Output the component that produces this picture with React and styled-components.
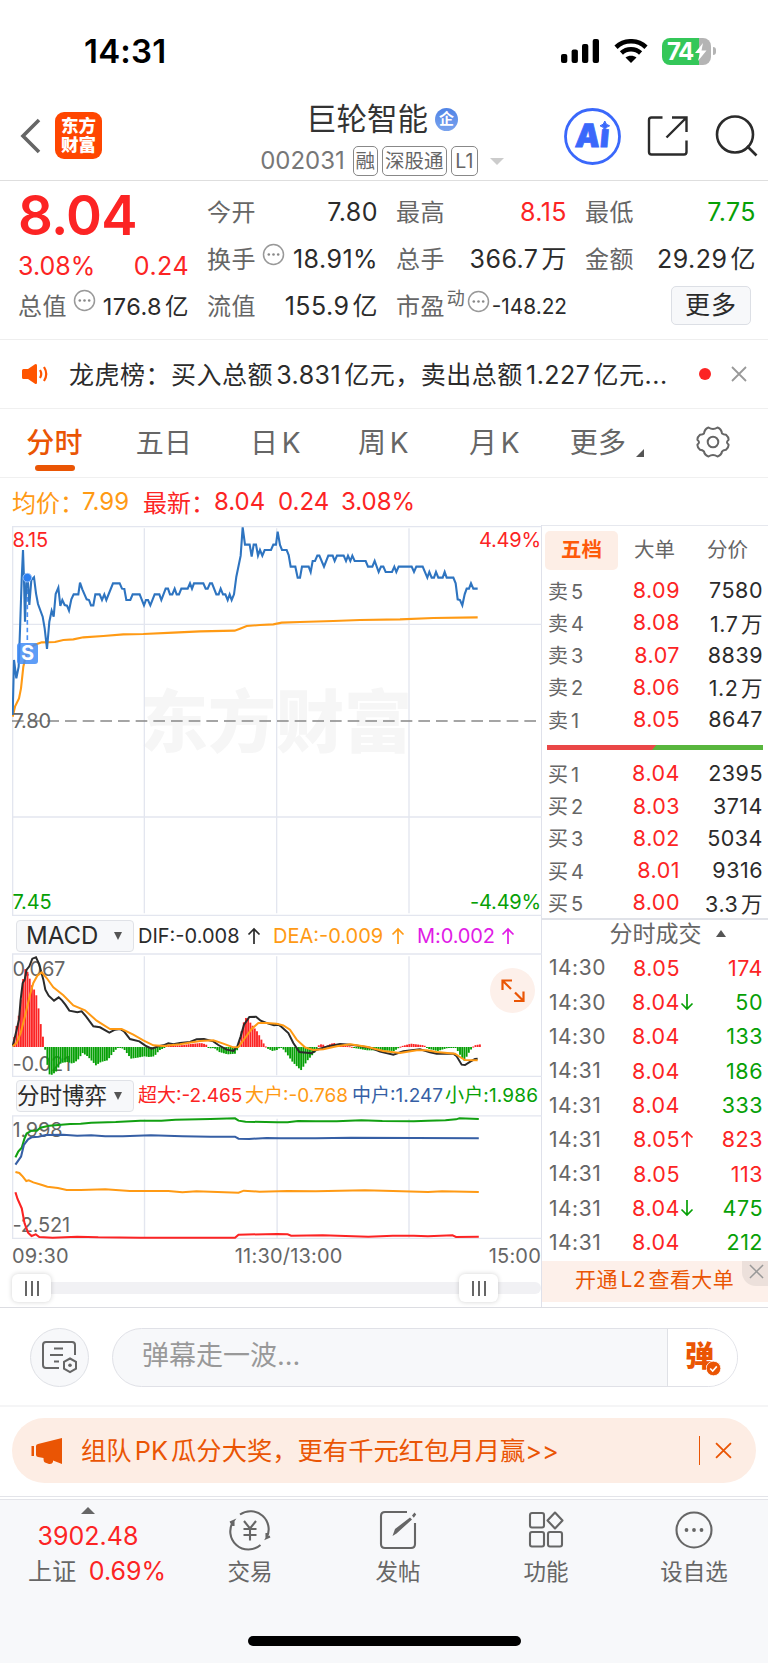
import React from "react";
import styled, { createGlobalStyle, css } from "styled-components";

const RED = "#fc2424";
const GREEN = "#06a006";
const ORANGE = "#ff9a14";
const BRAND = "#ea5504";
const INK = "#2b2b2b";
const GREY = "#666";

const Global = createGlobalStyle`
  * { box-sizing: border-box; }
  body { margin: 0; background: #fff; }
  body, #root {
    font-family: Inter, "Noto Sans CJK SC", sans-serif;
    color: ${INK};
    text-autospace: normal;
  }
`;

const Page = styled.div`
  width: 768px;
  height: 1663px;
  overflow: hidden;
  display: flex;
  flex-direction: column;
  background: #fff;
  white-space: nowrap;
`;

/* ---------- status bar ---------- */
const StatusBar = styled.div`
  height: 92px;
  display: flex;
  align-items: center;
  justify-content: space-between;
  padding: 10px 52px 0 84px;
`;
const Clock = styled.div`
  font-size: 33px;
  font-weight: 600;
  color: #000;
  letter-spacing: 0.2px;
`;
const StatusIcons = styled.div`
  display: flex;
  align-items: center;
`;
const Battery = styled.div`
  position: relative;
  width: 49px;
  height: 27px;
  margin-left: 14px;
  border-radius: 8px;
  background: linear-gradient(90deg, #34c759 37px, #b4b4b4 37px);
  color: #fff;
  font-size: 24px;
  line-height: 27px;
  font-weight: 700;
  padding-left: 5px;
  letter-spacing: -1.6px;
`;
const Bolt = styled.svg`
  position: absolute;
  left: 32px;
  top: 5px;
`;
const BatteryNub = styled.div`
  width: 3px;
  height: 8px;
  margin-left: 2px;
  border-radius: 0 4px 4px 0;
  background: #b4b4b4;
`;

/* ---------- header ---------- */
const Header = styled.div`
  height: 89px;
  display: grid;
  grid-template-columns: 1fr auto 1fr;
  border-bottom: 1px solid #dedede;
`;
const HeaderLeft = styled.div`
  display: flex;
  align-items: center;
  padding-left: 20px;
`;
const Logo = styled.div`
  width: 47px;
  height: 47px;
  margin: -1px 0 0 14px;
  border-radius: 9px;
  background: #ff4600;
  color: #fff;
  font-size: 17.5px;
  line-height: 19px;
  font-weight: 900;
  text-align: center;
  padding-top: 4px;
`;
const Title = styled.div`
  display: flex;
  flex-direction: column;
  align-items: center;
  padding: 9px 4px 0 0;
`;
const StockName = styled.div`
  display: flex;
  align-items: center;
  height: 36px;
  font-size: 30.5px;
  line-height: 36px;
  color: #333;
`;
const EntBadge = styled.span`
  width: 23px;
  height: 23px;
  margin-left: 7px;
  border-radius: 50%;
  background: linear-gradient(#4f83e6, #7ba4ee);
  color: #fff;
  font-size: 15px;
  line-height: 22px;
  font-weight: 700;
  text-align: center;
`;
const CodeRow = styled.div`
  display: flex;
  align-items: center;
  margin-top: 9px;
  color: #777;
  font-size: 24px;
  line-height: 30px;
  height: 30px;
`;
const Tag = styled.span`
  height: 30px;
  margin-left: ${(p) => p.$gap || 4}px;
  width: ${(p) => p.$w}px;
  border: 1.4px solid #888;
  border-radius: 5px;
  font-size: 19.5px;
  line-height: 28px;
  text-align: center;
  color: #666;
`;
const Caret = styled.span`
  width: 0;
  height: 0;
  margin-left: 12px;
  border: 7px solid transparent;
  border-top-color: #ccc;
  border-bottom: 0;
`;
const HeaderRight = styled.div`
  display: flex;
  align-items: center;
  justify-content: flex-end;
  padding-right: 10px;
`;
const HeaderIcon = styled.svg`
  margin-left: ${(p) => p.$ml || 25}px;
  flex: none;
`;

/* ---------- quote ---------- */
const Quote = styled.div`
  height: 159px;
  display: grid;
  grid-template-columns: repeat(4, 171px);
  column-gap: 18px;
  padding: 8px 0 0 18px;
  border-bottom: 1px solid #eeeeee;
`;
const QuoteCol = styled.div`
  display: flex;
  flex-direction: column;
`;
const Cell = styled.div`
  height: ${(p) => p.$h || 47}px;
  display: flex;
  align-items: center;
  line-height: 47px;
`;
const Label = styled.span`
  font-size: 24px;
  color: ${GREY};
  letter-spacing: 0.4px;
`;
const Value = styled.span`
  margin-left: auto;
  font-size: ${(p) => p.$s || 25}px;
  color: ${(p) => p.$c || INK};
  letter-spacing: ${(p) => p.$ls ?? 0.45}px;
`;
const BigPrice = styled.div`
  height: 61px;
  font-size: 54.5px;
  line-height: 53px;
  font-weight: 600;
  color: ${RED};
  letter-spacing: -0.8px;
`;
const Sup = styled.sup`
  font-size: 18px;
  line-height: 18px;
  color: ${GREY};
  align-self: flex-start;
  margin: 7px 0 0 2px;
`;
const InfoDots = styled.svg`
  align-self: flex-start;
  margin: 7px 0 0 ${(p) => p.$ml ?? 6}px;
  flex: none;
`;
const MoreButton = styled.div`
  width: 80px;
  height: 39px;
  margin: -2px 0 0 86px;
  border: 1.4px solid #dcdfe5;
  border-radius: 5px;
  background: #f7f8fa;
  font-size: 25px;
  line-height: 36px;
  text-align: center;
  letter-spacing: 1px;
`;

/* ---------- notice ---------- */
const Notice = styled.div`
  height: 69px;
  display: flex;
  align-items: center;
  padding: 0 21px;
  border-bottom: 1px solid #f0f0f0;
`;
const NoticeText = styled.div`
  width: 616px;
  margin-left: 20px;
  padding-bottom: 3px;
  font-size: 25px;
  letter-spacing: 0.5px;
`;
const RedDot = styled.span`
  width: 12px;
  height: 12px;
  margin-left: 14px;
  border-radius: 50%;
  background: ${RED};
`;
const NoticeClose = styled.span`
  margin-left: 20px;
  line-height: 0;
`;

/* ---------- period tabs ---------- */
const Tabs = styled.div`
  height: 69px;
  display: flex;
  border-bottom: 1px solid #f0f0f0;
`;
const Tab = styled.div`
  position: relative;
  width: ${(p) => p.$w}px;
  padding-right: ${(p) => p.$pr || 0}px;
  text-align: center;
  font-size: 28px;
  line-height: 68px;
  letter-spacing: 0.3px;
  color: ${(p) => (p.$on ? BRAND : GREY)};
  font-weight: ${(p) => (p.$on ? 500 : 400)};
  ${(p) =>
    p.$on &&
    css`
      &::after {
        content: "";
        position: absolute;
        left: 35px;
        bottom: 6px;
        width: 40px;
        height: 6px;
        border-radius: 3px;
        background: ${BRAND};
      }
    `}
`;
const Corner = styled.span`
  position: absolute;
  right: 9px;
  bottom: 20px;
  border: 4.2px solid #555;
  border-top-color: transparent;
  border-left-color: transparent;
`;
const Gear = styled.svg`
  display: inline-block;
  vertical-align: top;
  margin: 16px 0 0 4px;
`;

/* ---------- chart area ---------- */
const Legend = styled.div`
  height: 47px;
  display: flex;
  align-items: center;
  padding-left: 12px;
  font-size: 24px;
  color: ${RED};
`;
const LegendItem = styled.span`
  width: ${(p) => p.$w}px;
  color: ${(p) => p.$c || RED};
`;
const Main = styled.div`
  height: 783px;
  display: flex;
  border-bottom: 1px solid #dcdde2;
`;
const Charts = styled.div`
  width: 542px;
  padding-left: 12px;
  border-right: 1.5px solid #dfe1ea;
`;
const Plot = styled.div`
  position: relative;
  height: ${(p) => p.$h}px;
`;
const Canvas = styled.svg`
  display: block;
  position: relative;
`;
const AxisLabel = styled.span`
  position: absolute;
  font-size: 20px;
  line-height: 20px;
  letter-spacing: -0.2px;
  color: ${(p) => p.$c || GREY};
  ${(p) => (p.$right ? "right: 0;" : "left: 0.5px;")}
  top: ${(p) => p.$top}px;
`;
const Watermark = styled.span`
  position: absolute;
  left: 128px;
  top: 152px;
  font-size: 68px;
  line-height: 90px;
  font-weight: 900;
  color: #f6f6f6;
`;
const SellMark = styled.span`
  position: absolute;
  left: 5px;
  top: 118px;
  width: 21px;
  height: 21px;
  border-radius: 3px;
  background: rgba(66, 140, 246, 0.85);
  color: #fff;
  font-size: 20px;
  line-height: 21px;
  font-weight: 700;
  text-align: center;
`;
const IndicatorRow = styled.div`
  height: ${(p) => p.$h}px;
  display: flex;
  align-items: center;
  padding: ${(p) => p.$pt || 0}px 0 0 4px;
`;
const Picker = styled.div`
  width: 118px;
  height: 32px;
  display: flex;
  align-items: center;
  justify-content: space-between;
  padding: 0 11px 0 ${(p) => p.$pl}px;
  margin-right: 4px;
  border: 1.4px solid #e0e2e7;
  border-radius: 4px;
  background: #f7f8fa;
  font-size: ${(p) => p.$s}px;
  line-height: 30px;
  &::after {
    content: "";
    border: 4.5px solid transparent;
    border-top: 8px solid #555;
    border-bottom: 0;
  }
`;
const Reading = styled.span`
  width: ${(p) => p.$w}px;
  display: flex;
  align-items: center;
  font-size: ${(p) => p.$s || 20}px;
  line-height: 28px;
  letter-spacing: ${(p) => p.$ls || 0}px;
  color: ${(p) => p.$c || INK};
`;
const ExpandButton = styled.div`
  position: absolute;
  right: 6px;
  top: 15px;
  width: 45px;
  height: 45px;
  border-radius: 50%;
  background: #fdf0ea;
`;
const TimeAxis = styled.div`
  height: 32px;
  display: flex;
  justify-content: space-between;
  align-items: center;
  padding-top: 1px;
  font-size: 20px;
  letter-spacing: 0.2px;
  color: ${GREY};
`;
const MidTime = styled.span`
  margin-left: 20px;
`;
const RangeTrack = styled.div`
  height: 12px;
  margin-top: 11px;
  border-radius: 0 6px 6px 0;
  background: #f1f1f4;
  display: flex;
  align-items: center;
`;
const Thumb = styled.div`
  width: 39px;
  height: 28px;
  margin-right: 408px;
  flex: none;
  display: flex;
  align-items: center;
  justify-content: center;
  gap: 4px;
  border-radius: 6px;
  background: #fff;
  box-shadow: 0 0 5px rgba(0, 0, 0, 0.18);
  & + & {
    margin-right: 0;
  }
  i {
    width: 2px;
    height: 15px;
    background: #666;
  }
`;

/* ---------- order book ---------- */
const Side = styled.div`
  flex: 1;
`;
const BookTabs = styled.div`
  height: 49px;
  display: flex;
  align-items: center;
  padding: 1px 0 0 3px;
  border-top: 1px solid #e6e8ee;
`;
const BookTab = styled.div`
  width: 73px;
  height: 39px;
  border-radius: 5px;
  font-size: 20.5px;
  line-height: 38px;
  text-align: center;
  color: ${(p) => (p.$on ? "#fe5a0a" : GREY)};
  font-weight: ${(p) => (p.$on ? 700 : 400)};
  background: ${(p) => (p.$on ? "#fdeee6" : "none")};
`;
const BookRow = styled.div`
  height: ${(p) => p.$h}px;
  display: flex;
  align-items: center;
  padding: 0 5px 0 ${(p) => p.$pl ?? 6}px;
  font-size: 21.5px;
  letter-spacing: 0.5px;
`;
const BookName = styled.span`
  width: ${(p) => (p.$time ? 84 : 85)}px;
  font-size: ${(p) => (p.$time ? 21 : 20)}px;
  color: ${GREY};
`;
const BookPrice = styled.span`
  display: flex;
  justify-content: flex-end;
  width: 47px;
  color: ${RED};
`;
const BookQty = styled.span`
  margin-left: auto;
  color: ${(p) => p.$c || INK};
`;
const Ratio = styled.div`
  height: 5px;
  margin: 10px 5px 7px;
  background: linear-gradient(130deg, #ea4747 49.3%, #58b63d 49.9%);
`;
const DealsTitle = styled.div`
  height: 33px;
  margin-top: -1px;
  padding: 0 0 3px 25px;
  display: flex;
  align-items: center;
  justify-content: center;
  border-top: 2px solid #e0e2e8;
  font-size: 23px;
  line-height: 28px;
  color: ${GREY};
  &::after {
    content: "";
    margin-left: 14px;
    border: 5px solid transparent;
    border-bottom: 7px solid #555;
    border-top: 0;
  }
`;
const L2Banner = styled.div`
  position: relative;
  height: 41px;
  margin-top: 1px;
  padding-left: 33px;
  background: #fdf0ea;
  color: ${BRAND};
  font-size: 21px;
  line-height: 38px;
  letter-spacing: 0.4px;
`;
const L2Close = styled.span`
  position: absolute;
  right: 0;
  top: 0;
  width: 26px;
  height: 25px;
  border-radius: 0 0 0 14px;
  background: #ece0db;
  svg {
    display: block;
    margin: 3px 0 0 7px;
  }
`;

/* ---------- comment bar ---------- */
const CommentBar = styled.div`
  height: 99px;
  display: flex;
  align-items: center;
  padding: 1px 30px 0;
  border-bottom: 2px solid #f5f5f6;
`;
const RoundButton = styled.div`
  width: 59px;
  height: 59px;
  border: 1px solid #dfe1e6;
  border-radius: 50%;
  background: #f7f8fa;
  display: flex;
  align-items: center;
  justify-content: center;
`;
const Field = styled.div`
  width: 626px;
  height: 59px;
  margin-left: 23px;
  border: 1.4px solid #e0e1e7;
  border-radius: 30px;
  background: #f7f8fa;
  display: flex;
  overflow: hidden;
`;
const Placeholder = styled.div`
  flex: 1;
  padding-left: 29px;
  font-size: 27px;
  line-height: 53px;
  color: #999;
`;
const DanmuButton = styled.div`
  position: relative;
  width: 70px;
  padding-left: 17px;
  background: #fff;
  border-left: 1px solid #dfe1e6;
  color: ${BRAND};
  font-size: 29px;
  line-height: 56px;
  font-weight: 900;
  svg {
    position: absolute;
    left: 38px;
    top: 32px;
  }
`;

/* ---------- promo ---------- */
const PromoWrap = styled.div`
  height: 93px;
  padding: 11px 12px 0;
  border-bottom: 4px double #e3e4e9;
`;
const Promo = styled.div`
  height: 65px;
  display: flex;
  align-items: center;
  padding: 0 24px 0 19px;
  border-radius: 33px;
  background: #fdede4;
  color: ${BRAND};
`;
const PromoText = styled.div`
  flex: 1;
  margin-left: 18px;
  padding-bottom: 3px;
  font-size: 25.3px;
`;
const PromoDivider = styled.span`
  width: 1.5px;
  height: 29px;
  margin-right: 15px;
  background: ${BRAND};
`;

/* ---------- bottom nav ---------- */
const BottomNav = styled.div`
  flex: 1;
  background: #f7f8fa;
  display: flex;
  flex-direction: column;
  align-items: center;
`;
const NavRow = styled.div`
  width: 768px;
  height: 136px;
  display: flex;
`;
const IndexBlock = styled.div`
  width: 176px;
  display: flex;
  flex-direction: column;
  align-items: center;
  padding-top: 7px;
  font-size: 25px;
  line-height: 35px;
  color: ${RED};
  &::before {
    content: "";
    border: 7px solid transparent;
    border-bottom-color: #666;
    border-top: 0;
    margin-bottom: 5px;
  }
`;
const IndexLine = styled.div`
  display: flex;
  gap: 12px;
  padding-left: 18px;
`;
const NavItem = styled.div`
  width: 148px;
  display: flex;
  flex-direction: column;
  align-items: center;
  padding-top: 9px;
  font-size: 22.5px;
  line-height: 42px;
  color: ${GREY};
`;
const HomeIndicator = styled.div`
  width: 273px;
  height: 10px;
  border-radius: 5px;
  background: #000;
`;

/* ---------- data ---------- */
const pricePoints =
  "38,735 42,570 49,625 56,590 60,480 65,330 69,240 72,330 75,455 79,340 83,320 88,405 94,330 102,322 108,370 114,402 128,440 134,475 141,537 148,455 155,422 161,440 167,372 175,353 181,408 187,390 194,405 201,407 207,422 214,388 221,373 235,373 240,338 247,358 260,388 267,390 273,406 280,406 286,373 299,373 306,390 313,373 319,390 339,340 359,340 366,356 373,357 379,390 391,390 398,373 419,373 432,406 438,390 444,390 451,406 464,373 478,373 484,390 497,356 504,356 510,373 517,373 524,356 530,373 537,373 544,356 563,356 570,340 576,356 582,340 610,340 617,356 623,356 630,340 636,340 649,373 656,373 662,356 669,373 676,373 683,390 689,373 695,390 702,373 709,320 722,257 728,172 735,224 749,224 755,260 761,224 768,224 774,257 780,240 787,257 794,240 813,240 820,224 828,224 833,185 840,225 846,240 860,240 866,255 872,290 886,290 893,323 900,323 906,290 926,290 932,306 938,273 945,273 952,257 958,257 972,290 985,257 998,257 1004,273 1011,257 1031,257 1038,273 1044,257 1051,273 1057,257 1064,273 1097,273 1104,290 1117,290 1124,273 1136,306 1143,290 1150,290 1157,306 1176,306 1183,290 1189,306 1196,290 1235,290 1242,306 1249,290 1268,290 1282,323 1288,306 1295,323 1302,323 1308,306 1315,323 1328,323 1334,306 1340,323 1360,323 1367,340 1373,388 1380,390 1387,406 1394,373 1400,356 1407,356 1413,340 1420,356 1433,356";
const averagePoints =
  "38,740 45,710 57,685 63,655 70,590 78,555 90,535 103,525 125,517 165,516 190,510 220,508 250,502 310,498 370,493 430,492 520,488 600,484 704,482 720,476 740,468 780,465 820,463 845,458 900,456 1000,453 1080,450 1200,448 1300,444 1433,442";
const difPoints =
  "38,440 50,390 57,360 62,300 68,250 74,240 80,210 88,200 97,177 108,173 116,190 122,210 130,240 136,270 146,288 162,303 176,293 186,302 196,315 208,333 232,338 245,335 258,350 280,380 300,383 328,399 345,390 360,388 372,395 390,418 418,425 436,438 455,447 475,440 490,437 505,431 520,434 540,430 570,427 590,419 612,418 640,425 655,436 680,450 700,454 712,440 722,410 732,375 748,352 768,351 782,363 805,372 822,377 835,375 845,382 865,400 880,430 898,457 935,461 950,450 985,440 1020,433 1060,436 1110,444 1140,456 1180,465 1210,455 1260,449 1290,458 1310,462 1360,462 1370,470 1385,495 1395,496 1412,485 1425,478 1433,477";
const deaPoints =
  "38,440 50,430 62,400 75,350 90,285 100,250 112,228 125,218 140,235 160,263 190,287 220,317 255,332 290,363 330,388 365,388 400,405 430,422 460,437 490,439 540,434 600,424 640,422 670,432 700,443 715,442 735,415 755,388 775,370 800,370 830,372 850,377 870,390 890,420 915,443 940,451 970,449 1010,440 1050,434 1100,441 1150,454 1200,460 1250,452 1280,452 1310,457 1365,462 1380,472 1395,481 1433,482";
const macdEnvelope = [
  [40, 30], [50, 80], [57, 110], [64, 190], [72, 235], [80, 225], [92, 187], [105, 162], [112, 122], [118, 77], [125, 37], [131, 3],
  [136, -30], [143, -80], [150, -85], [165, -75], [180, -48], [200, -45], [215, -50], [230, -40], [245, -18], [260, -28], [285, -55],
  [300, -45], [320, -40], [340, -12], [352, -2], [368, -5], [390, -35], [410, -32], [430, -28], [445, -30], [460, -28], [475, -10],
  [490, -3], [500, 6], [520, 5], [540, 5], [560, 8], [600, 12], [615, 8], [625, -4], [640, -3], [655, -15], [680, -22], [705, -20],
  [712, 0], [720, 40], [732, 88], [742, 85], [750, 70], [770, 45], [785, 15], [795, 1], [800, -5], [815, -12], [832, -8], [838, 2],
  [850, -10], [875, -45], [900, -70], [920, -40], [945, -12], [955, 8], [965, 8], [975, 2], [990, 10], [1000, 12], [1010, 5],
  [1050, 2], [1060, -3], [1100, -10], [1140, -10], [1180, -12], [1200, 2], [1230, 10], [1270, 5], [1280, -5], [1310, -12],
  [1340, -3], [1365, -2], [1375, -20], [1390, -42], [1405, -15], [1415, -1], [1420, 5], [1438, 8],
];
const macdBars = [];
for (let x = 40; x < 1438; x += 6.62) {
  const i = macdEnvelope.findIndex((p) => p[0] > x);
  const [x0, v0] = macdEnvelope[i - 1];
  const [x1, v1] = macdEnvelope[i];
  macdBars.push({ x, v: v0 + ((v1 - v0) * (x - x0)) / (x1 - x0) });
}
const flows = [
  ["#12a012", "44,232 52,215 62,203 70,175 76,160 90,152 105,152 115,143 140,137 200,132 230,131 260,128 330,126 400,122 460,122 500,119 600,117 670,115 680,122 700,125 790,127 820,127 850,123 900,124 960,124 1030,121 1090,123 1180,124 1220,122 1270,121 1300,118 1310,115 1365,117"],
  ["#365fa5", "44,254 60,230 68,195 80,178 90,172 110,170 130,165 180,164 220,167 260,166 300,169 350,169 430,166 520,169 600,170 670,170 680,176 710,177 760,174 800,175 900,175 1000,173 1365,175"],
  ["#ff9a14", "44,276 55,279 65,290 75,303 82,301 95,307 120,315 135,320 165,324 190,330 230,330 300,328 370,333 480,333 520,337 560,334 680,338 695,332 740,335 820,333 900,334 1040,331 1120,333 1220,336 1260,334 1365,336"],
  ["#fc2424", "44,337 50,357 62,385 70,430 80,458 90,468 102,463 112,471 150,473 220,470 280,472 400,473 670,473 680,464 790,462 820,463 830,467 920,466 1050,470 1120,467 1180,467 1220,469 1290,466 1300,471 1365,470"],
];
const asks = [["卖5", "8.09", "7580"], ["卖4", "8.08", "1.7万"], ["卖3", "8.07", "8839"], ["卖2", "8.06", "1.2万"], ["卖1", "8.05", "8647"]];
const bids = [["买1", "8.04", "2395"], ["买2", "8.03", "3714"], ["买3", "8.02", "5034"], ["买4", "8.01", "9316"], ["买5", "8.00", "3.3万"]];
const deals = [
  ["14:30", "8.05", "", "174", RED],
  ["14:30", "8.04", "down", "50", GREEN],
  ["14:30", "8.04", "", "133", GREEN],
  ["14:31", "8.04", "", "186", GREEN],
  ["14:31", "8.04", "", "333", GREEN],
  ["14:31", "8.05", "up", "823", RED],
  ["14:31", "8.05", "", "113", RED],
  ["14:31", "8.04", "down", "475", GREEN],
  ["14:31", "8.04", "", "212", GREEN],
];

/* ---------- small drawings ---------- */
const Dots = ({ ml }) => (
  <InfoDots $ml={ml} width="23" height="23" viewBox="0 0 23 23">
    <circle cx="11.5" cy="11.5" r="10" fill="none" stroke="#999" strokeWidth="1.5" />
    {[6.8, 11.5, 16.2].map((x) => (
      <circle key={x} cx={x} cy="11.5" r="1.3" fill="#888" />
    ))}
  </InfoDots>
);
const Cross = ({ size, color, w = 2 }) => (
  <svg width={size} height={size} viewBox="0 0 16 16">
    <path d="M1 1L15 15M15 1L1 15" stroke={color} strokeWidth={w} fill="none" />
  </svg>
);
const Arrow = ({ dir, color }) => (
  <svg width="14" height="18" viewBox="0 0 14 18">
    <path
      d={dir === "up" ? "M7 17V2M1.5 7.5L7 2L12.5 7.5" : "M7 1V16M1.5 10.5L7 16L12.5 10.5"}
      fill="none"
      stroke={color}
      strokeWidth="1.7"
    />
  </svg>
);

function PriceChart() {
  return (
    <Plot $h={391}>
      <Watermark>东方财富</Watermark>
      <Canvas width="530" height="391" viewBox="36 165 1590 1173">
        <g stroke="#e3e6ef" strokeWidth="4" fill="none">
          <path d="M36 170H1626M38 168V1335M36 1336H1626" />
          <path d="M36 463H1626M36 1041H1626M433 175V1330M830 175V1330M1227 175V1330" />
        </g>
        <path d="M36 753H1626" stroke="#888" strokeWidth="4.5" strokeDasharray="35 18" />
        <path d="M82 335V520" stroke="#4a90f5" strokeWidth="5" strokeDasharray="14 9" />
        <polyline points={averagePoints} fill="none" stroke={ORANGE} strokeWidth="6.3" />
        <polyline points={pricePoints} fill="none" stroke="#2e74c0" strokeWidth="6.3" />
        <circle cx="82" cy="323" r="13" fill="#2d7ff0" stroke="#9cc4fb" strokeWidth="3" />
      </Canvas>
      <AxisLabel $top={5} $c={RED}>8.15</AxisLabel>
      <AxisLabel $top={5} $right $c={RED}>4.49%</AxisLabel>
      <AxisLabel $top={186}>7.80</AxisLabel>
      <AxisLabel $top={367} $c={GREEN}>7.45</AxisLabel>
      <AxisLabel $top={367} $right $c={GREEN}>-4.49%</AxisLabel>
      <SellMark>S</SellMark>
    </Plot>
  );
}

function MacdChart() {
  return (
    <Plot $h={124}>
      <AxisLabel $top={6}>0.067</AxisLabel>
      <AxisLabel $top={101}>-0.021</AxisLabel>
      <Canvas width="530" height="124" viewBox="36 160 1590 372">
        <g stroke="#e3e6ef" strokeWidth="4" fill="none">
          <path d="M36 163H1626M38 162V532M36 530H1626M433 170V527M830 170V527M1227 170V527" />
        </g>
        {macdBars.map((b) => (
          <rect
            key={b.x}
            x={b.x}
            width="5.6"
            y={b.v > 0 ? 442 - b.v : 442}
            height={Math.max(3, Math.abs(b.v))}
            fill={b.v > 0 ? RED : GREEN}
          />
        ))}
        <polyline points={difPoints} fill="none" stroke="#2b2b2b" strokeWidth="6" />
        <polyline points={deaPoints} fill="none" stroke={ORANGE} strokeWidth="6" />
      </Canvas>
      <ExpandButton>
        <svg width="45" height="45" viewBox="0 0 45 45">
          <path
            d="M12.5 22V12.5H22M12.5 12.5L21 21M33.5 23.5V33H24M33.5 33L25 24.5"
            fill="none"
            stroke={BRAND}
            strokeWidth="2.2"
          />
        </svg>
      </ExpandButton>
    </Plot>
  );
}

function FlowChart() {
  return (
    <Plot $h={124}>
      <AxisLabel $top={5}>1.998</AxisLabel>
      <AxisLabel $top={100}>-2.521</AxisLabel>
      <Canvas width="530" height="124" viewBox="34.2 105 1511 372" preserveAspectRatio="none">
        <g stroke="#e3e6ef" strokeWidth="4" fill="none">
          <path d="M34 107.5H1545M36 106V478M34 475.500H1545M412 116V474M790 116V474M1166 116V474" />
        </g>
        {flows.map(([c, pts]) => (
          <polyline key={c} points={pts} fill="none" stroke={c} strokeWidth="6" />
        ))}
      </Canvas>
    </Plot>
  );
}

const Ladder = ({ rows }) =>
  rows.map(([name, price, qty]) => (
    <BookRow key={name} $h={32.25}>
      <BookName>{name}</BookName>
      <BookPrice>{price}</BookPrice>
      <BookQty>{qty}</BookQty>
    </BookRow>
  ));

export default function App() {
  return (
    <Page>
      <Global />
      <StatusBar>
        <Clock>14:31</Clock>
        <StatusIcons>
          <svg width="39" height="24" viewBox="0 0 39 24">
            <rect x="0" y="15" width="6.3" height="9" rx="2" />
            <rect x="10.600" y="10.500" width="6.3" height="13.5" rx="2" />
            <rect x="21" y="5" width="6.3" height="19" rx="2" />
            <rect x="31.700" y="0" width="6.3" height="24" rx="2" />
          </svg>
          <svg width="34" height="24" viewBox="0 0 34 24" style={{ marginLeft: 14 }}>
            <g fill="none" stroke="#000" strokeWidth="4.6">
              <path d="M2 8.200C10.400 0.300 23.600 0.300 32 8.200" />
              <path d="M7.400 14C12.800 9 21.200 9 26.600 14" />
            </g>
            <path d="M17 24L11.500 18.600C14.600 16 19.400 16 22.500 18.600Z" />
          </svg>
          <Battery>
            74
            <Bolt width="13" height="18" viewBox="0 0 13 18">
              <path d="M9 0L1 10H6L4 18L12.500 7.500H7.500Z" fill="#fff" />
            </Bolt>
          </Battery>
          <BatteryNub />
        </StatusIcons>
      </StatusBar>

      <Header>
        <HeaderLeft>
          <svg width="21" height="36" viewBox="0 0 21 36">
            <path d="M19 2L3 18L19 34" fill="none" stroke="#666" strokeWidth="3.6" />
          </svg>
          <Logo>
            东方
            <br />
            财富
          </Logo>
        </HeaderLeft>
        <Title>
          <StockName>
            巨轮智能<EntBadge>企</EntBadge>
          </StockName>
          <CodeRow>
            002031
            <Tag $w={25} $gap={8}>融</Tag>
            <Tag $w={65}>深股通</Tag>
            <Tag $w={27}>L1</Tag>
            <Caret />
          </CodeRow>
        </Title>
        <HeaderRight>
          <HeaderIcon width="57" height="57" viewBox="0 0 57 57">
            <circle cx="28.5" cy="28.5" r="27" fill="none" stroke="#3a68fb" strokeWidth="2.8" />
            <g transform="translate(3.4 0) skewX(-5)">
              <text x="10.500" y="39" textLength="34" lengthAdjust="spacingAndGlyphs" fontFamily="Inter" fontWeight="900" fontSize="32" fill="#3a68fb" stroke="#3a68fb" strokeWidth="0.8">
                Ai
              </text>
            </g>
            <rect x="34" y="12" width="13" height="9" fill="#fff" />
            <path d="M40.800 13Q41.600 17 45.600 17.800Q41.600 18.600 40.800 22.600Q40 18.600 36 17.800Q40 17 40.800 13Z" fill="#3a68fb" stroke="#3a68fb" />
          </HeaderIcon>
          <HeaderIcon width="42" height="42" viewBox="0 0 42 42">
            <path
              d="M16.500 2.500H5.500Q3 2.500 3 5V37Q3 39.500 5.500 39.500H38Q40.500 39.500 40.500 37V25.500M26 2.500H40.500V17M40 3L20.500 22.500"
              fill="none"
              stroke="#2b2b2b"
              strokeWidth="2.4"
            />
          </HeaderIcon>
          <HeaderIcon $ml={26} width="44" height="42" viewBox="0 0 44 42">
            <circle cx="21" cy="19.500" r="18" fill="none" stroke="#2b2b2b" strokeWidth="2.6" />
            <path d="M33 31L42.500 40.500" stroke="#2b2b2b" strokeWidth="2.600" />
          </HeaderIcon>
        </HeaderRight>
      </Header>

      <Quote>
        <QuoteCol>
          <BigPrice>8.04</BigPrice>
          <Cell $h={32}>
            <Value $c={RED} $ls={0} style={{ marginLeft: 0 }}>3.08%</Value>
            <Value $c={RED}>0.24</Value>
          </Cell>
          <Cell $h={48}>
            <Label>总值</Label>
            <Dots />
            <Value $s={23.5}>176.8亿</Value>
          </Cell>
        </QuoteCol>
        <QuoteCol>
          <Cell><Label>今开</Label><Value>7.80</Value></Cell>
          <Cell><Label>换手</Label><Dots /><Value>18.91%</Value></Cell>
          <Cell><Label>流值</Label><Value>155.9亿</Value></Cell>
        </QuoteCol>
        <QuoteCol>
          <Cell><Label>最高</Label><Value $c={RED}>8.15</Value></Cell>
          <Cell><Label>总手</Label><Value>366.7万</Value></Cell>
          <Cell><Label>市盈</Label><Sup>动</Sup><Dots ml={2} /><Value $s={20.8} $ls={0}>-148.22</Value></Cell>
        </QuoteCol>
        <QuoteCol>
          <Cell><Label>最低</Label><Value $c={GREEN}>7.75</Value></Cell>
          <Cell><Label>金额</Label><Value>29.29亿</Value></Cell>
          <Cell><MoreButton>更多</MoreButton></Cell>
        </QuoteCol>
      </Quote>

      <Notice>
        <svg width="28" height="22" viewBox="0 0 28 22">
          <path d="M1 7.500Q1 6 2.500 6H7L14 1.200Q16 0.300 16 2.500V19.500Q16 21.700 14 20.800L7 16H2.500Q1 16 1 14.500Z" fill="#ff5500" />
          <path d="M19 7Q21.500 11 19 15M23 4Q27.500 11 23 18" fill="none" stroke="#ff5500" strokeWidth="2.2" />
        </svg>
        <NoticeText>龙虎榜：买入总额3.831亿元，卖出总额1.227亿元...</NoticeText>
        <RedDot />
        <NoticeClose><Cross size={16} color="#999" w={1.8} /></NoticeClose>
      </Notice>

      <Tabs>
        <Tab $w={110} $pr={1} $on>分时</Tab>
        <Tab $w={108}>五日</Tab>
        <Tab $w={115}>日K</Tab>
        <Tab $w={101}>周K</Tab>
        <Tab $w={121}>月K</Tab>
        <Tab $w={98} $pr={12}>更多<Corner /></Tab>
        <Tab $w={115}>
          <Gear width="34" height="34" viewBox="0 0 34 34">
            <path
              d="M12.500 2.500Q17 5.500 21.500 2.500Q25.500 4 26 8.500Q27.500 9.500 30 9.800Q33 12.500 32.500 15Q29.500 17 32.500 19.500Q33 22 30 24.800Q27 25 26 26.500Q25.500 30 21.500 31.500Q17 28.500 12.500 31.500Q8.500 30 8 26.500Q6.500 25 4 24.800Q1 22 1.500 19.500Q4.500 17 1.500 15Q1 12.500 4 9.800Q7 9.500 8 8.500Q8.500 4 12.500 2.500Z"
              fill="none"
              stroke="#666"
              strokeWidth="2"
              strokeLinejoin="round"
            />
            <circle cx="17" cy="17" r="5.3" fill="none" stroke="#666" strokeWidth="2" />
          </Gear>
        </Tab>
      </Tabs>

      <Legend>
        <LegendItem $w={70} $c={ORANGE}>均价：</LegendItem>
        <LegendItem $w={61} $c={ORANGE}>7.99</LegendItem>
        <LegendItem $w={71}>最新：</LegendItem>
        <LegendItem $w={64}>8.04</LegendItem>
        <LegendItem $w={63}>0.24</LegendItem>
        <LegendItem $w={80}>3.08%</LegendItem>
      </Legend>

      <Main>
        <Charts>
          <PriceChart />
          <IndicatorRow $h={37} $pt={2}>
            <Picker $s={24} $pl={9}>MACD</Picker>
            <Reading $w={109}>DIF:-0.008</Reading>
            <Reading $w={26}><Arrow dir="up" color={INK} /></Reading>
            <Reading $w={118} $c={ORANGE}>DEA:-0.009</Reading>
            <Reading $w={26}><Arrow dir="up" color={ORANGE} /></Reading>
            <Reading $w={84} $c="#e01be6" $ls={-0.1}>M:0.002</Reading>
            <Reading $w={20}><Arrow dir="up" color="#e01be6" /></Reading>
          </IndicatorRow>
          <MacdChart />
          <IndicatorRow $h={38}>
            <Picker $s={22.5} $pl={0}>分时博弈</Picker>
            <Reading $w={107} $s={19} $c={RED}>超大:-2.465</Reading>
            <Reading $w={107} $s={19} $c={ORANGE}>大户:-0.768</Reading>
            <Reading $w={93} $s={19} $c="#365fa5">中户:1.247</Reading>
            <Reading $w={90} $s={19} $ls={0.15} $c={GREEN}>小户:1.986</Reading>
          </IndicatorRow>
          <FlowChart />
          <TimeAxis>
            <span>09:30</span>
            <MidTime>11:30/13:00</MidTime>
            <span>15:00</span>
          </TimeAxis>
          <RangeTrack>
            <Thumb><i /><i /><i /></Thumb>
            <Thumb><i /><i /><i /></Thumb>
          </RangeTrack>
        </Charts>

        <Side>
          <BookTabs>
            <BookTab $on>五档</BookTab>
            <BookTab>大单</BookTab>
            <BookTab>分价</BookTab>
          </BookTabs>
          <Ladder rows={asks} />
          <Ratio />
          <Ladder rows={bids} />
          <DealsTitle>分时成交</DealsTitle>
          {deals.map(([t, p, dir, q, c], i) => (
            <BookRow key={i} $h={34.35} $pl={7}>
              <BookName $time>{t}</BookName>
              <BookPrice>{p}</BookPrice>
              {dir && <Arrow dir={dir} color={c} />}
              <BookQty $c={c}>{q}</BookQty>
            </BookRow>
          ))}
          <L2Banner>
            开通L2查看大单
            <L2Close><Cross size={15} color="#999" w={1.6} /></L2Close>
          </L2Banner>
        </Side>
      </Main>

      <CommentBar>
        <RoundButton>
          <svg width="37" height="34" viewBox="0 0 37 34">
            <g fill="none" stroke="#666" strokeWidth="2">
              <path d="M18 28H5Q2 28 2 25V5Q2 2 5 2H31Q34 2 34 5V15" />
              <path d="M13 8.500H22M9 15H22M13 21.500H18" />
              <path d="M29 18.500L35 21.800V28.600L29 32L23 28.600V21.800Z" />
            </g>
            <circle cx="29" cy="25.200" r="1.800" fill="#666" />
          </svg>
        </RoundButton>
        <Field>
          <Placeholder>弹幕走一波...</Placeholder>
          <DanmuButton>
            弹
            <svg width="15" height="15" viewBox="0 0 15 15">
              <circle cx="7.500" cy="7.500" r="7.300" fill={BRAND} stroke="#fff" strokeWidth="0.800" />
              <path d="M4.200 7.500L6.700 10L10.800 5.400" fill="none" stroke="#fff" strokeWidth="1.600" />
            </svg>
          </DanmuButton>
        </Field>
      </CommentBar>

      <PromoWrap>
        <Promo>
          <svg width="32" height="28" viewBox="0 0 32 28">
            <path d="M0.500 9H3V19H0.500ZM5 9Q5 7.500 7 7L31 1V27L22 23.500V25Q21 27.500 18 27L14 25.500Q12.500 25 12.500 21L7 20Q5 19.500 5 18Z" fill={BRAND} />
          </svg>
          <PromoText>组队PK瓜分大奖，更有千元红包月月赢&gt;&gt;</PromoText>
          <PromoDivider />
          <Cross size={17} color={BRAND} w={1.7} />
        </Promo>
      </PromoWrap>

      <BottomNav>
        <NavRow>
          <IndexBlock>
            <div>3902.48</div>
            <IndexLine>
              <Label>上证</Label>
              <span>0.69%</span>
            </IndexLine>
          </IndexBlock>
          <NavItem>
            <svg width="44" height="42" viewBox="0 0 44 42">
              <g fill="none" stroke="#666" strokeWidth="2.100">
                <path d="M12 5.500A18.200 18.200 0 0 1 38.500 29L42 27.500M38.500 29V24" />
                <path d="M32.500 36A18.200 18.200 0 0 1 5.500 12L2 13.500M5.500 12V17" />
                <path d="M16 12L22 19.500L28 12M22 19.500V31.500M15.500 20H28.500M15.500 26H28.500" />
              </g>
            </svg>
            交易
          </NavItem>
          <NavItem>
            <svg width="44" height="42" viewBox="0 0 44 42">
              <path d="M31 3H9Q5 3 5 7V35Q5 39 9 39H35Q39 39 39 35V14" fill="none" stroke="#666" strokeWidth="2.100" />
              <path d="M16.500 27L19 20L34 8.500L36 10.500L20.500 24.500ZM36 6.500L38.500 3.500L40.200 5.500L37.800 8.800Z" fill="#666" />
            </svg>
            发帖
          </NavItem>
          <NavItem>
            <svg width="44" height="42" viewBox="0 0 44 42">
              <g fill="none" stroke="#666" strokeWidth="2.100">
                <rect x="6" y="4" width="14" height="14.500" rx="2" />
                <rect x="6" y="23" width="14" height="14.500" rx="2" />
                <rect x="24" y="23" width="14" height="14.500" rx="2" />
                <path d="M31 3.500L38.500 11.500L31 19.500L23.500 11.500Z" strokeLinejoin="round" />
              </g>
            </svg>
            功能
          </NavItem>
          <NavItem>
            <svg width="44" height="42" viewBox="0 0 44 42">
              <circle cx="22" cy="21" r="17.500" fill="none" stroke="#666" strokeWidth="2.100" />
              <circle cx="14.500" cy="21" r="1.900" fill="#666" />
              <circle cx="22" cy="21" r="1.900" fill="#666" />
              <circle cx="29.500" cy="21" r="1.900" fill="#666" />
            </svg>
            设自选
          </NavItem>
        </NavRow>
        <HomeIndicator />
      </BottomNav>
    </Page>
  );
}
